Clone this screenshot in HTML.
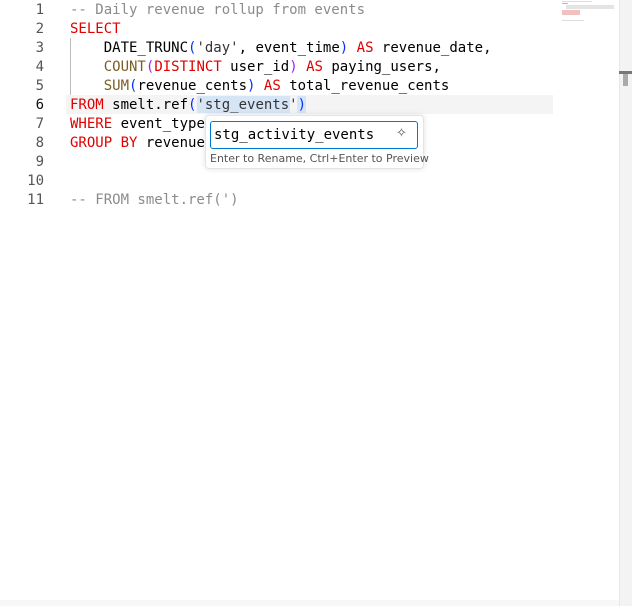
<!DOCTYPE html>
<html><head><style>
html,body{margin:0;padding:0;width:632px;height:606px;background:#fff;overflow:hidden;position:relative}
.mono{font-family:"DejaVu Sans Mono","Liberation Mono",monospace;font-size:14px}
.ln{position:absolute;left:0;width:44px;text-align:right;color:#555;height:19px;line-height:19px}
.ln.cur{color:#111}
.code{position:absolute;left:70px;height:19px;line-height:19px;white-space:pre;color:#000}
.c{color:#8b8b8b}.k{color:#e00000}.f{color:#795e26}.p{color:#0431fa}.pp{color:#a020f0}.s{color:#333}
</style></head><body>
<div style="position:absolute;left:66px;top:95px;width:487px;height:19px;background:#f4f4f4"></div>
<div style="position:absolute;left:205px;top:96px;width:85px;height:17px;background:#d6e5f6"></div>
<div style="position:absolute;left:197px;top:96px;width:9px;height:17px;background:#d6e5f6"></div>
<div style="position:absolute;left:297px;top:96px;width:9px;height:17px;background:#d6e5f6"></div>
<div style="position:absolute;left:70px;top:38px;width:1px;height:57px;background:#bbb"></div>
<div class="mono" style="position:absolute;left:0;top:1px;width:632px">
<div class="ln" style="top:0">1</div><div class="ln" style="top:19px">2</div><div class="ln" style="top:38px">3</div><div class="ln" style="top:57px">4</div><div class="ln" style="top:76px">5</div><div class="ln cur" style="top:95px">6</div><div class="ln" style="top:114px">7</div><div class="ln" style="top:133px">8</div><div class="ln" style="top:152px">9</div><div class="ln" style="top:171px">10</div><div class="ln" style="top:190px">11</div>
<div class="code c" style="top:0">-- Daily revenue rollup from events</div>
<div class="code k" style="top:19px">SELECT</div>
<div class="code" style="top:38px">    DATE_TRUNC<span class="p">(</span><span class="s">'day'</span>, event_time<span class="p">)</span> <span class="k">AS</span> revenue_date,</div>
<div class="code" style="top:57px">    <span class="f">COUNT</span><span class="pp">(</span><span class="k">DISTINCT</span> user_id<span class="pp">)</span> <span class="k">AS</span> paying_users,</div>
<div class="code" style="top:76px">    <span class="f">SUM</span><span class="p">(</span>revenue_cents<span class="p">)</span> <span class="k">AS</span> total_revenue_cents</div>
<div class="code" style="top:95px"><span class="k">FROM</span> smelt.ref<span class="p">(</span><span class="s">'stg_events'</span><span class="p">)</span></div>
<div class="code" style="top:114px"><span class="k">WHERE</span> event_type</div>
<div class="code" style="top:133px"><span class="k">GROUP BY</span> revenue</div>
<div class="code c" style="top:190px">-- FROM smelt.ref(')</div>
</div>
<div style="position:absolute;left:205px;top:115px;width:217px;height:52px;background:#fff;border:1px solid #e4e4e4;border-radius:4px;box-shadow:0 0 6px rgba(0,0,0,.12)"></div>
<div class="mono" style="position:absolute;left:210px;top:121px;width:203px;height:26px;border:1.5px solid #0078d4;border-radius:3px;line-height:26px;padding-left:3px;box-sizing:content-box;color:#000">stg_activity_events</div>
<div style="position:absolute;left:396px;top:126px;color:#555;font-size:13px;font-family:'DejaVu Sans',sans-serif">✧</div>
<div style="position:absolute;left:210px;top:152px;font:11px 'DejaVu Sans','Liberation Sans',sans-serif;color:#555">Enter to Rename, Ctrl+Enter to Preview</div>
<div style="position:absolute;left:619px;top:0;width:13px;height:606px;background:#f3f3f3;border-left:1px solid #e8e8e8"></div>
<div style="position:absolute;left:619px;top:71px;width:13px;height:3px;background:#777"></div>
<div style="position:absolute;left:623px;top:74px;width:5px;height:12px;background:#aaa"></div>
<div style="position:absolute;left:562px;top:1px;width:30px;height:1px;background:#ddd"></div>
<div style="position:absolute;left:562px;top:3px;width:6px;height:1px;background:#f0a0a0"></div>
<div style="position:absolute;left:566px;top:5px;width:48px;height:4px;background:#e4e4e4"></div>
<div style="position:absolute;left:562px;top:10px;width:18px;height:5px;background:#f3c0c0"></div>
<div style="position:absolute;left:562px;top:20px;width:22px;height:1px;background:#ddd"></div>
<div style="position:absolute;left:0;top:600px;width:619px;height:6px;background:#f7f7f7"></div>
</body></html>
